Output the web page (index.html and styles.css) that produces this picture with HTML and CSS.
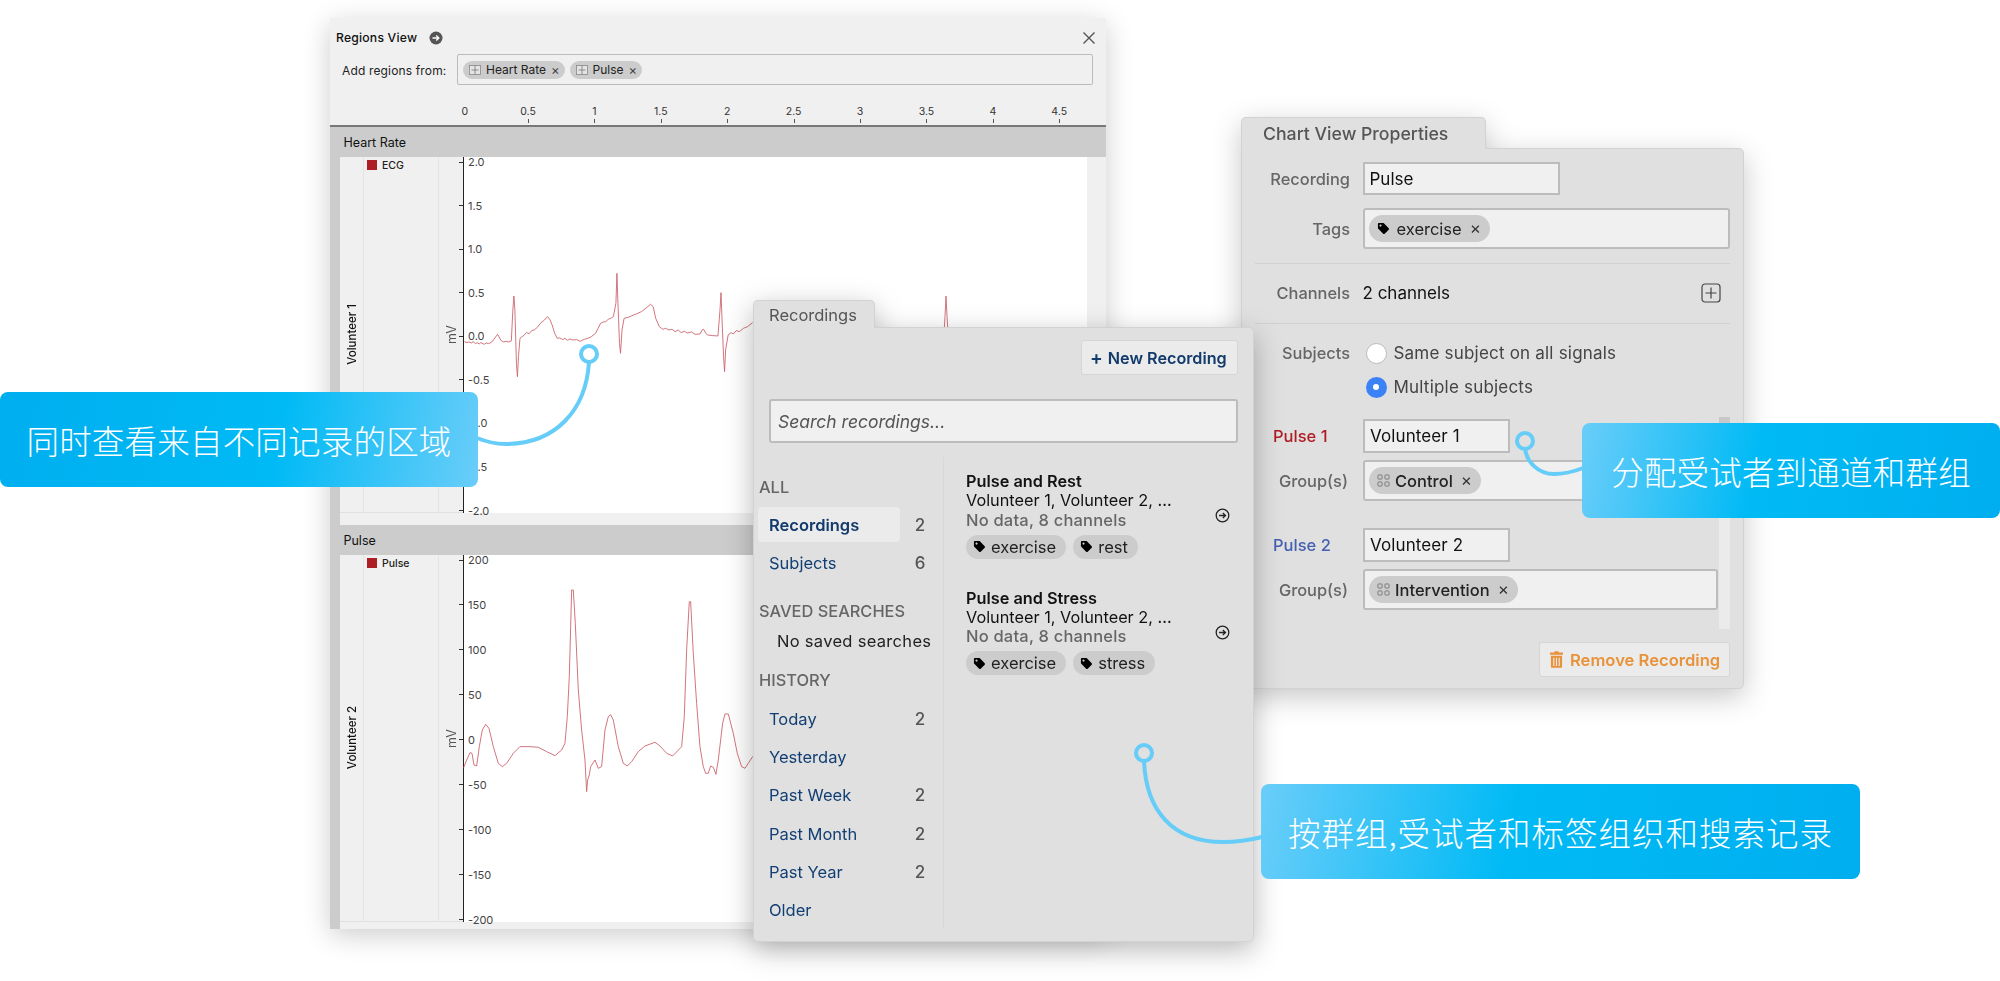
FILE: index.html
```html
<!DOCTYPE html>
<html lang="zh">
<head>
<meta charset="utf-8">
<title>Regions View</title>
<link rel="stylesheet" href="styles.css">
</head>
<body>
<svg width="0" height="0" class="defs">
  <symbol id="tag" viewBox="0 0 14 14"><path fill-rule="evenodd" d="M1 2.2C1 1.5 1.5 1 2.2 1h4.2c.4 0 .7.1 1 .4l5.2 5.2c.5.5.5 1.2 0 1.7l-4.3 4.3c-.5.5-1.2.5-1.7 0L1.400 7.400C1.100 7.100 1 6.800 1 6.400zM3.800 2.600a1.200 1.200 0 1 0 0 2.400 1.200 1.200 0 0 0 0-2.400z"/></symbol>
  <symbol id="grp" viewBox="0 0 14 14"><g fill="none" stroke="#777" stroke-width="1"><rect x="1" y="1" width="4.500" height="4.500" rx="1"/><rect x="8.500" y="1" width="4.500" height="4.500" rx="1"/><rect x="1" y="8.500" width="4.500" height="4.500" rx="1"/><rect x="8.500" y="8.500" width="4.500" height="4.500" rx="1"/></g></symbol>
  <symbol id="reg" viewBox="0 0 12 10"><rect x=".5" y=".5" width="11" height="9" fill="#e4e4e4" stroke="#888" stroke-width=".8"/><path d="M6 .5v9M2.500 5h7" stroke="#777" stroke-width=".8"/></symbol>
  <symbol id="go" viewBox="0 0 14 14"><circle cx="7" cy="7" r="5.900" fill="none" stroke="#222" stroke-width="1.200"/><path d="M3.800 7h6M7.300 4.600 9.800 7 7.300 9.400" fill="none" stroke="#222" stroke-width="1.200"/></symbol>
</svg>

<main class="desk">

  <section class="win regions">
    <header class="rv-title">
      <h1 class="rv-name">Regions View</h1>
      <svg class="rv-go" viewBox="0 0 14 14"><circle cx="7" cy="7" r="6.500" fill="#555"/><path d="M3.500 7h6.500M7.200 4.500 9.800 7 7.200 9.500" fill="none" stroke="#fff" stroke-width="1.400"/></svg>
      <svg class="rv-close" viewBox="0 0 14 14"><path d="M1.500 1.500l11 11M12.500 1.500l-11 11" stroke="#555" stroke-width="1.400"/></svg>
    </header>
    <div class="rv-add">
      <span class="rv-label">Add regions from:</span>
      <div class="rv-input">
        <span class="rv-chip"><svg class="rv-ico"><use href="#reg"/></svg>Heart Rate<span class="rv-x">×</span></span>
        <span class="rv-chip"><svg class="rv-ico"><use href="#reg"/></svg>Pulse<span class="rv-x">×</span></span>
      </div>
    </div>
    <div class="ruler">
      <span class="rt">0</span><span class="rt">0.5</span><span class="rt">1</span><span class="rt">1.5</span><span class="rt">2</span><span class="rt">2.5</span><span class="rt">3</span><span class="rt">3.5</span><span class="rt">4</span><span class="rt">4.5</span>
    </div>

    <h2 class="band">Heart Rate</h2>
    <div class="track track-a">
      <div class="strip"></div>
      <div class="who"><span class="vert">Volunteer 1</span></div>
      <div class="legend"><span class="swatch"></span>ECG</div>
      <div class="unit"><span class="vert">mV</span></div>
      <div class="plot">
        <svg class="trace" preserveAspectRatio="none">
          <g transform="translate(-143 -147) scale(.5102 .3333)">
            <polyline class="line" points="283,995 288,998 292,996 297,999 300,995 305,1001 308,998 312,1002 315,998 322,1003 326,999 330,1001 336,997 340,990 348,973 355,992 360,996 365,994 370,996 375,993 378,900 380,858 382,900 385,1060 387,1100 389,1040 392,985 398,978 405,968 410,971 415,962 420,960 426,952 432,940 440,930 446,920 451,930 455,945 460,970 465,985 470,984 476,989 480,985 485,991 490,987 495,990 503,989 510,994 518,988 525,985 532,980 540,970 545,955 550,940 555,936 560,935 565,928 570,925 575,920 580,880 582,790 584,880 587,1000 589,1030 592,960 596,925 604,922 610,918 620,912 630,905 640,893 648,883 653,890 658,925 665,950 672,958 677,955 684,960 690,958 696,965 702,960 708,968 714,964 720,969 728,966 735,973 745,972 749,960 752,958 756,970 760,975 770,977 780,978 784,900 786,848 788,930 791,1040 793,1085 795,1020 800,975 806,968 810,972 816,962 822,965 830,955 838,950 848,938"/>
            <polyline class="line" points="1222,1000 1225,920 1227,858 1229,920 1232,1000"/>
          </g>
        </svg>
        <div class="yaxis">
          <span class="yt">2.0</span><span class="yt">1.5</span><span class="yt">1.0</span><span class="yt">0.5</span><span class="yt">0.0</span><span class="yt">-0.5</span><span class="yt">-1.0</span><span class="yt">-1.5</span><span class="yt">-2.0</span>
        </div>
      </div>
    </div>

    <h2 class="band">Pulse</h2>
    <div class="track track-b">
      <div class="strip"></div>
      <div class="who"><span class="vert">Volunteer 2</span></div>
      <div class="legend"><span class="swatch"></span>Pulse</div>
      <div class="unit"><span class="vert">mV</span></div>
      <div class="plot">
        <svg class="trace" preserveAspectRatio="none">
          <g transform="translate(-143 -65) scale(.3333)">
            <polyline class="line" points="430,835 440,810 450,788 456,790 462,825 470,828 478,770 487,720 497,703 507,715 520,770 535,820 547,830 560,820 580,790 600,770 630,770 655,772 680,785 705,797 725,780 735,760 742,680 748,560 755,300 760,300 766,400 775,600 785,720 795,810 800,905 803,870 808,855 812,830 825,810 835,835 845,830 855,720 865,680 872,674 880,690 895,770 910,820 922,828 935,815 955,785 975,768 1005,757 1020,768 1040,790 1058,798 1085,770 1093,680 1100,480 1108,335 1112,335 1120,490 1130,640 1140,770 1150,830 1157,850 1165,850 1172,828 1180,832 1188,853 1195,810 1208,700 1215,672 1225,672 1240,730 1252,790 1265,830 1275,835 1285,820 1296,803 1320,775"/>
          </g>
        </svg>
        <div class="yaxis">
          <span class="yt">200</span><span class="yt">150</span><span class="yt">100</span><span class="yt">50</span><span class="yt">0</span><span class="yt">-50</span><span class="yt">-100</span><span class="yt">-150</span><span class="yt">-200</span>
        </div>
      </div>
    </div>
  </section>

  <section class="win chart">
    <div class="tab chart-tab">Chart View Properties</div>
    <div class="sheet chart-sheet">
      <div class="form">
        <label class="lbl">Recording</label>
        <div class="field field-s">Pulse</div>
        <label class="lbl">Tags</label>
        <div class="field field-r field-tags"><span class="chip chip-lg chip-tag"><svg class="ico"><use href="#tag"/></svg>exercise<span class="x">×</span></span></div>
      </div>
      <hr class="rule rule-1">
      <div class="form channels-row">
        <span class="lbl">Channels</span>
        <div class="value"><span>2 channels</span>
          <svg class="plus" viewBox="0 0 20 20"><rect x="1" y="1" width="18" height="18" rx="3" fill="none" stroke="#444" stroke-width="1.200"/><path d="M10 4.500v11M4.500 10h11" stroke="#444" stroke-width="1.200"/></svg>
        </div>
      </div>
      <hr class="rule rule-2">
      <div class="form subjects">
        <span class="lbl lbl-sub">Subjects</span>
        <div class="radios">
          <div class="radio"><span class="dot"></span>Same subject on all signals</div>
          <div class="radio"><span class="dot dot-on"></span>Multiple subjects</div>
        </div>
      </div>
      <div class="channels">
        <div class="ch-list">
          <span class="ch-name ch-red">Pulse 1</span>
          <div class="field field-s field-v">Volunteer 1</div>
          <span class="lbl">Group(s)</span>
          <div class="field field-r field-g"><span class="chip chip-lg"><svg class="ico"><use href="#grp"/></svg>Control<span class="x">×</span></span></div>
          <span class="ch-name ch-blue ch-gap">Pulse 2</span>
          <div class="field field-s field-v ch-gap">Volunteer 2</div>
          <span class="lbl">Group(s)</span>
          <div class="field field-r field-g"><span class="chip chip-lg"><svg class="ico"><use href="#grp"/></svg>Intervention<span class="x">×</span></span></div>
        </div>
        <div class="scroll"><div class="thumb"></div></div>
      </div>
      <div class="actions">
        <button class="btn btn-rm"><svg class="trash" viewBox="0 0 14 18"><path fill="#e8923a" d="M5 0h4l.6 1.500H14V4H0V1.500h4.400zM1 5h12v12c0 .6-.4 1-1 1H2c-.6 0-1-.4-1-1zm2.500 2v9h1.200V7zm2.900 0v9h1.200V7zm2.900 0v9h1.200V7z"/></svg>Remove Recording</button>
      </div>
    </div>
  </section>

  <section class="win recs">
    <div class="tab recs-tab">Recordings</div>
    <div class="sheet recs-sheet">
      <div class="recs-top"><button class="btn btn-new"><span class="btn-plus">+</span>New Recording</button></div>
      <div class="search">Search recordings...</div>
      <div class="recs-cols">
        <nav class="side">
          <h3 class="side-h side-h-all">ALL</h3>
          <div class="side-row side-on"><span class="side-name">Recordings</span><span class="side-n">2</span></div>
          <div class="side-row"><span class="side-name">Subjects</span><span class="side-n">6</span></div>
          <h3 class="side-h side-h-saved">SAVED SEARCHES</h3>
          <p class="side-none">No saved searches</p>
          <h3 class="side-h side-h-hist">HISTORY</h3>
          <div class="side-hist">
            <div class="side-row"><span class="side-name">Today</span><span class="side-n">2</span></div>
            <div class="side-row"><span class="side-name">Yesterday</span></div>
            <div class="side-row"><span class="side-name">Past Week</span><span class="side-n">2</span></div>
            <div class="side-row"><span class="side-name">Past Month</span><span class="side-n">2</span></div>
            <div class="side-row"><span class="side-name">Past Year</span><span class="side-n">2</span></div>
            <div class="side-row"><span class="side-name">Older</span></div>
          </div>
        </nav>
        <div class="list">
          <article class="rec">
            <div class="rec-body">
              <div class="rec-t">Pulse and Rest</div>
              <div class="rec-l">Volunteer 1, Volunteer 2, ...</div>
              <div class="rec-m">No data, 8 channels</div>
              <div class="rec-tags"><span class="chip"><svg class="ico"><use href="#tag"/></svg>exercise</span><span class="chip"><svg class="ico"><use href="#tag"/></svg>rest</span></div>
            </div>
            <svg class="rec-go"><use href="#go"/></svg>
          </article>
          <article class="rec">
            <div class="rec-body">
              <div class="rec-t">Pulse and Stress</div>
              <div class="rec-l">Volunteer 1, Volunteer 2, ...</div>
              <div class="rec-m">No data, 8 channels</div>
              <div class="rec-tags"><span class="chip"><svg class="ico"><use href="#tag"/></svg>exercise</span><span class="chip"><svg class="ico"><use href="#tag"/></svg>stress</span></div>
            </div>
            <svg class="rec-go"><use href="#go"/></svg>
          </article>
        </div>
      </div>
    </div>
  </section>

  <svg class="links" viewBox="0 0 2000 981">
    <g fill="none" stroke="#66ccf8" stroke-width="4">
      <circle cx="589" cy="354" r="8"/>
      <path d="M589 362C586 410 556 444 505 444C495 444 487 442 477 438"/>
      <circle cx="1525" cy="441" r="8"/>
      <path d="M1525 449C1527 462 1538 474 1554 474C1564 474 1573 472 1583 468"/>
      <circle cx="1144" cy="753" r="8"/>
      <path d="M1144 761C1146 810 1172 842 1223 842C1238 842 1250 840 1262 837"/>
    </g>
  </svg>

  <div class="call call-left">同时查看来自不同记录的区域</div>
  <div class="call call-right">分配受试者到通道和群组</div>
  <div class="call call-bottom">按群组,受试者和标签组织和搜索记录</div>
</main>
</body>
</html>
```
FILE: styles.css
```css
* { box-sizing: border-box; }
html, body { margin: 0; padding: 0; background: #fff; }
body { font-family: "Inter", "Noto Sans", "Noto Sans CJK SC", sans-serif; color: #111; }
.defs { position: absolute; }
.desk { position: relative; width: 2000px; height: 981px; overflow: hidden; background: #fff; }
.win { position: absolute; }

/* Regions window */
.regions { left: 330px; top: 18px; width: 776px; height: 911px; display: flex; flex-direction: column; background: #f0f0f0; box-shadow: 0 6px 26px rgba(0,0,0,.2); }
.rv-title { height: 36px; padding: 3px 10px 0 6px; display: flex; align-items: center; }
.rv-name { margin: 0; font-size: 12.200px; font-weight: 500; letter-spacing: .2px; color: #111; }
.rv-go { width: 14px; height: 14px; margin-left: 12px; }
.rv-close { width: 14px; height: 14px; margin-left: auto; }
.rv-add { height: 31px; display: flex; align-items: center; padding: 0 13px 0 12px; }
.rv-label { width: 115px; padding-top: 2px; font-size: 12px; letter-spacing: .15px; color: #222; white-space: nowrap; }
.rv-input { flex: 1; height: 31px; display: flex; align-items: center; gap: 5px; padding-left: 5px; background: #f0f0f0; border: 1px solid #bbb; border-radius: 2px; }
.rv-chip { height: 18px; padding: 0 5px 0 6px; display: flex; align-items: center; font-size: 12px; color: #222; background: #ccc; border-radius: 9px; white-space: nowrap; }
.rv-ico { width: 12px; height: 10px; margin-right: 5px; }
.rv-x { margin-left: 5px; font-size: 13px; color: #444; }
.ruler { height: 42px; display: flex; align-items: flex-end; padding-left: 98.500px; border-bottom: 2px solid #777; }
.rt { position: relative; width: 66.400px; height: 20px; text-align: center; font-size: 10.500px; line-height: 14px; color: #333; flex: none; }
.rt:first-child { text-indent: 6px; }
.rt:first-child::after { display: none; }
.rt::after { content: ""; position: absolute; left: 50%; bottom: 2px; width: 1px; height: 4px; background: #555; }
.band { margin: 0; height: 30px; padding-left: 13.500px; display: flex; align-items: center; font-size: 12.500px; font-weight: 400; color: #111; background: #ccc; }
.track { display: grid; grid-template-columns: 10px 24px 74px 25px 624px 19px; }
.track-a { height: 368px; padding-bottom: 12px; }
.track-b { height: 374px; padding-bottom: 7px; }
.strip { background: #ccc; margin-bottom: -12px; }
.track-b .strip { margin-bottom: -7px; }
.who, .unit { display: flex; align-items: center; justify-content: center; border-bottom: 1px solid #e0e0e0; }
.who { font-size: 11.500px; font-weight: 500; color: #111; border-right: 1px solid #e4e4e4; }
.unit { font-size: 12.500px; color: #555; border-left: 1px solid #e4e4e4; }
.vert { writing-mode: vertical-rl; transform: rotate(180deg); white-space: nowrap; }
.legend { display: flex; align-items: flex-start; padding: 3px 0 0 3px; font-size: 10.500px; font-weight: 500; line-height: 12px; color: #222; border-bottom: 1px solid #e0e0e0; }
.swatch { width: 10px; height: 10px; margin-right: 5px; background: #ae1c24; flex: none; }
.plot { position: relative; background: #fff; }
.plot::before { content: ""; position: absolute; left: -.5px; top: 0; bottom: 0; width: 1.500px; background: #222; }
.trace { position: absolute; left: 0; top: 0; width: 100%; height: 100%; }
.line { fill: none; stroke: #bf3f4c; stroke-width: .9; stroke-linejoin: round; vector-effect: non-scaling-stroke; opacity: .8; }
.yaxis { position: absolute; left: 0; top: -1px; bottom: -3.500px; display: flex; flex-direction: column; justify-content: space-between; }
.yt { position: relative; height: 12px; padding-left: 5px; font-size: 11px; line-height: 12px; color: #444; white-space: nowrap; }
.yt::before { content: ""; position: absolute; left: -4px; top: 5.500px; width: 4px; height: 1px; background: #333; }

/* Panels */
.tab { position: relative; background: #e0e0e0; border: 1px solid #d2d2d2; border-bottom: 0; border-radius: 5px 5px 0 0; color: #555; font-weight: 500; display: flex; align-items: center; z-index: 1; }
.sheet { background: #e0e0e0; border: 1px solid #d2d2d2; border-radius: 0 5px 5px 5px; }
.recs { left: 753px; top: 300px; width: 501px; height: 642px; display: flex; flex-direction: column; filter: drop-shadow(0 8px 14px rgba(0,0,0,.28)); }
.recs-tab { width: 122px; height: 28px; padding-left: 15px; font-size: 16.500px; font-weight: 400; }
.recs-sheet { flex: 1; margin-top: -1px; padding-top: 12px; }
.recs-top { display: flex; justify-content: flex-end; padding-right: 15px; }
.btn { height: 35px; display: flex; align-items: center; background: #ebebeb; border: 1px solid #d5d5d5; border-radius: 3px; font-family: inherit; font-weight: 600; font-size: 16.200px; }
.btn-new { width: 157px; padding: 0 0 0 8px; color: #123a6b; }
.btn-plus { font-size: 19px; line-height: 1; margin-right: 5px; }
.search { height: 44px; margin: 24px 15px 0 15px; padding-left: 7px; display: flex; align-items: center; background: #f0f0f0; border: 2px solid #bcbcbc; border-radius: 3px; font-style: italic; font-size: 17.500px; color: #555; }
.recs-cols { margin-top: 14px; height: 471px; display: grid; grid-template-columns: 190px 1fr; }
.side { border-right: 1px solid #d8d8d8; padding-top: 20px; }
.side-h { margin: 0; height: 20px; padding-left: 5px; font-size: 16.400px; line-height: 20px; font-weight: 500; color: #666; white-space: nowrap; }
.side-h-all { margin-bottom: 10px; }
.side-h-saved { margin-top: 21px; }
.side-none { margin: 10px 0 0 23px; font-size: 16.500px; letter-spacing: .3px; line-height: 20px; color: #222; white-space: nowrap; }
.side-h-hist { margin-top: 19px; }
.side-hist { margin-top: 11px; display: flex; flex-direction: column; gap: 3.400px; }
.side-row { display: grid; grid-template-columns: 142px 24px; column-gap: 8px; height: 35px; margin: 0 0 3px 4px; align-items: center; }
.side-hist .side-row { margin-bottom: 0; }
.side-name { height: 35px; padding-left: 11px; display: flex; align-items: center; font-size: 16.500px; color: #123f73; border-radius: 4px; }
.side-on .side-name { background: #ebebeb; font-weight: 600; color: #123a6b; }
.side-n { text-align: center; font-size: 17px; color: #555; font-weight: 500; }
.list { padding: 15px 23px 0 22px; }
.rec { display: flex; align-items: center; justify-content: space-between; margin-bottom: 29.700px; }
.rec-t, .rec-l, .rec-m { font-size: 16.300px; line-height: 19.300px; white-space: nowrap; }
.rec-t { font-weight: 600; color: #111; }
.rec-l { color: #111; }
.rec-m { color: #666; font-weight: 500; font-size: 16.500px; letter-spacing: .2px; }
.rec-tags { margin-top: 5px; display: flex; gap: 7px; }
.chip { height: 24px; padding: 0 10px 0 7px; display: flex; align-items: center; background: #ccc; border-radius: 12px; font-size: 16.500px; color: #222; white-space: nowrap; }
.ico { width: 13px; height: 13px; margin-right: 5px; flex: none; }
.rec-go { width: 15px; height: 15px; flex: none; }

/* Chart panel */
.chart { left: 1241px; top: 117px; width: 503px; height: 572px; display: flex; flex-direction: column; filter: drop-shadow(0 8px 14px rgba(0,0,0,.22)); }
.chart-tab { width: 245px; height: 32px; padding-left: 21px; font-size: 17.700px; }
.chart-sheet { flex: 1; margin-top: -1px; padding: 13px 13px 0 13px; border-radius: 0 5px 5px 5px; }
.form { display: grid; grid-template-columns: 95px 1fr; column-gap: 12.500px; row-gap: 13px; align-items: center; }
.lbl { font-size: 16.400px; color: #666; text-align: right; white-space: nowrap; font-weight: 500; }
.field { background: #f0f0f0; border: 2px solid #bcbcbc; display: flex; align-items: center; font-size: 17px; color: #111; }
.field-s { width: 197px; height: 33px; padding-left: 5px; }
.field-v { width: 147px; height: 34px; padding-left: 5px; letter-spacing: .1px; }
.field-r { border-radius: 3px; padding-left: 4px; }
.field-tags { height: 41px; }
.chip-lg { height: 27px; border-radius: 14px; padding: 0 9px 0 8px; }
.field .chip-lg { font-size: 16.500px; font-weight: 500; }
.chip-lg .ico { margin-right: 5px; }
.field .chip-tag { font-weight: 400; }
.chip-tag .ico { margin-right: 7px; }
.x { margin-left: 8px; font-size: 17px; line-height: 1; font-weight: 400; color: #333; }
.rule { margin: 14px 0 0 0; border: 0; height: 1px; background: #d0d0d0; }
.channels-row { margin-top: 19px; height: 20px; }
.value { display: flex; align-items: center; justify-content: space-between; font-size: 17px; padding-right: 9px; color: #111; }
.plus { width: 20px; height: 20px; }
.rule-2 { margin-top: 20px; }
.subjects { margin-top: 18px; align-items: start; }
.lbl-sub { line-height: 20px; padding-top: 1px; }
.radios { display: flex; flex-direction: column; gap: 12px; }
.radio { height: 22px; display: flex; align-items: center; font-size: 17px; letter-spacing: .2px; color: #444; white-space: nowrap; }
.dot { width: 21px; height: 21px; margin: 0 7px 0 3px; border-radius: 50%; background: #fff; border: 1px solid #bbb; }
.dot-on { background: #3b82f6; border: 0; position: relative; }
.dot-on::after { content: ""; position: absolute; left: 7.500px; top: 7.500px; width: 6px; height: 6px; border-radius: 50%; background: #fff; }
.channels { margin-top: 19px; height: 212px; display: flex; }
.ch-list { width: 464px; padding-top: 2px; display: grid; grid-template-columns: 94px 355px; column-gap: 14px; grid-auto-rows: min-content; row-gap: 7px; align-items: center; }
.ch-name { padding-left: 18px; font-size: 16.500px; font-weight: 500; }
.ch-red { color: #ae1c24; }
.ch-blue { color: #4560b0; }
.ch-gap { margin-top: 20px; }
.ch-list .lbl { padding-right: 1px; }
.field-g { height: 41px; }
.scroll { width: 11px; height: 212px; background: #ebebeb; }
.thumb { height: 60px; background: #c8c8c8; }
.actions { margin-top: 13px; display: flex; justify-content: flex-end; }
.btn-rm { width: 191px; padding: 0 0 0 10px; color: #e8923a; white-space: nowrap; font-size: 16.600px; }
.trash { width: 13px; height: 17px; margin-right: 7px; flex: none; }

/* Callouts */
.links { position: absolute; left: 0; top: 0; width: 2000px; height: 981px; }
.call { position: absolute; height: 95px; display: flex; align-items: center; justify-content: center; font-family: "Noto Sans CJK SC", "Noto Sans", sans-serif; font-weight: 300; font-size: 32.500px; letter-spacing: .2px; color: #fff; border-radius: 8px; white-space: nowrap; }
.call-left { left: 0; top: 392px; width: 478px; background: linear-gradient(100deg, #00aeef 0%, #00baf5 58%, #6acdf9 100%); }
.call-right { left: 1582px; top: 423px; width: 418px; background: linear-gradient(100deg, #6acdf9 0%, #00baf5 42%, #00aeef 100%); }
.call-bottom { left: 1261px; top: 784px; width: 599px; letter-spacing: 1px; background: linear-gradient(100deg, #6acdf9 0%, #00baf5 42%, #00aeef 100%); }
```
